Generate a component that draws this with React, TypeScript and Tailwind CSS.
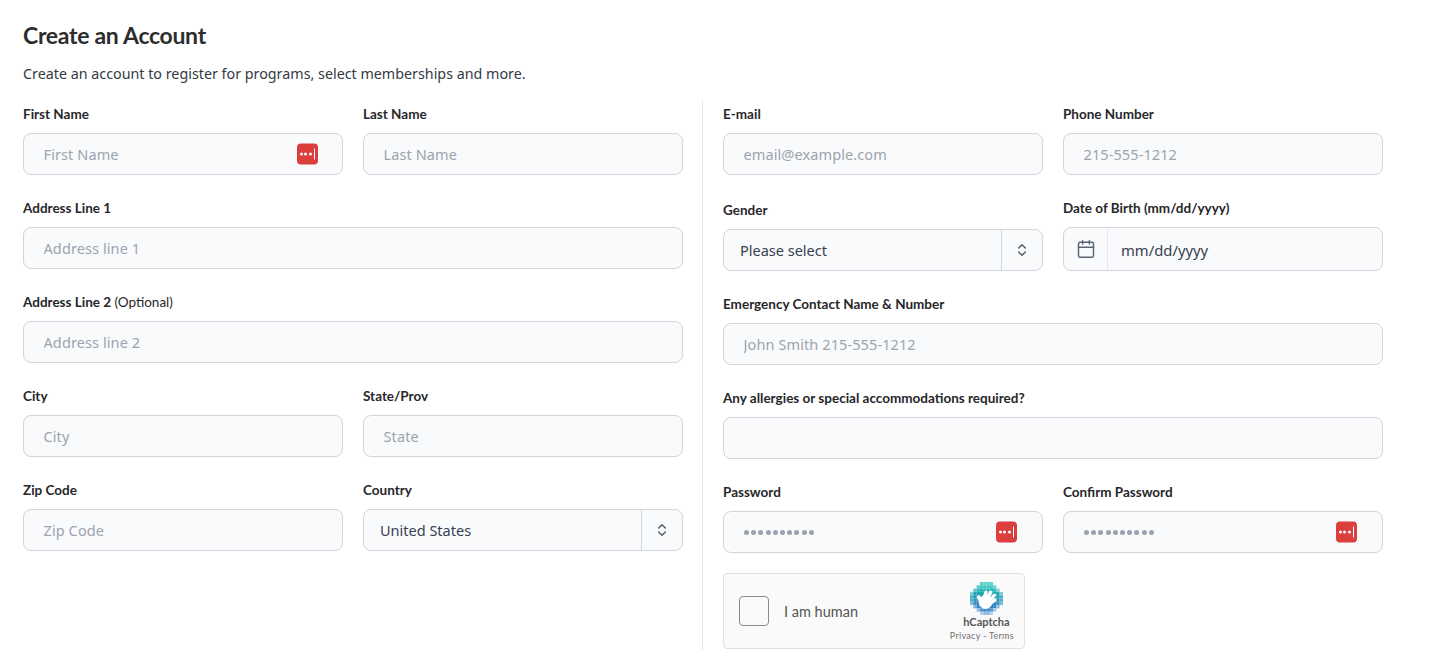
import { Calendar, ChevronsUpDown } from "lucide-react";
import type { ReactNode } from "react";

const inputClass =
  "h-[42px] w-full rounded-lg border border-[#d1d5db] bg-[#f9fafb] pl-[19.5px] pr-5 text-[14.5px] tracking-[0.1px] text-[#374151] outline-none placeholder:text-[#9ca3af]";

function KeyBadge() {
  return (
    <span className="absolute right-[25px] top-1/2 flex h-[21px] w-[21px] -translate-y-1/2 items-center justify-center gap-[1.5px] rounded-[4px] bg-[#dc3d3d]">
      <span className="h-[3px] w-[3px] rounded-full bg-white" />
      <span className="h-[3px] w-[3px] rounded-full bg-white" />
      <span className="h-[3px] w-[3px] rounded-full bg-white" />
      <span className="ml-[1px] h-[11px] w-[1px] bg-white" />
    </span>
  );
}

function Label({ children, className = "" }: { children: ReactNode; className?: string }) {
  return (
    <label className={`mb-[9px] block h-[20px] font-['Lato',sans-serif] text-[13.5px] font-bold leading-[20px] text-[#27272a] ${className}`}>
      {children}
    </label>
  );
}

function Field({
  label,
  placeholder,
  badge,
  span,
  type = "text",
}: {
  label: ReactNode;
  placeholder?: string;
  badge?: boolean;
  span?: boolean;
  type?: string;
}) {
  return (
    <div className={span ? "col-span-2" : ""}>
      <Label>{label}</Label>
      <div className="relative">
        <input className={inputClass} placeholder={placeholder} type={type} />
        {badge ? <KeyBadge /> : null}
      </div>
    </div>
  );
}

function SelectBox({ value, className = "" }: { value: string; className?: string }) {
  return (
    <div className={`flex h-[42px] items-center rounded-lg border border-[#d1d5db] bg-[#f9fafb] text-[14.5px] text-[#374151] ${className}`}>
      <span className="flex-1 pl-4 pt-[2px]">{value}</span>
      <span className="flex h-full w-[41px] items-center justify-center border-l border-[#d1d5db]">
        <ChevronsUpDown className="h-4 w-4 text-[#4b5563]" strokeWidth={2} aria-hidden="true" />
      </span>
    </div>
  );
}

function PasswordField({ label }: { label: string }) {
  return (
    <div>
      <Label>{label}</Label>
      <div className="relative flex h-[42px] items-center rounded-lg border border-[#d1d5db] bg-[#f9fafb] pl-5">
        <span className="flex gap-[2.2px]">
          {Array.from({ length: 10 }).map((_, index) => (
            <span className="h-[5px] w-[5px] rounded-full bg-[#9ca3af]" key={index} />
          ))}
        </span>
        <KeyBadge />
      </div>
    </div>
  );
}

const logoPixels: [number, number, string][] = [
  [3, 0, "#5fd6cb"], [4, 0, "#5fd6cb"], [5, 0, "#5fd6cb"], [6, 0, "#5fd6cb"],
  [2, 1, "#4fcdc6"], [3, 1, "#3fc9c0"], [4, 1, "#3cc8bf"], [5, 1, "#3cc8bf"], [6, 1, "#3fc9c0"], [7, 1, "#70d8d0"],
  [1, 2, "#5cc9c8"], [2, 2, "#2cb9bb"], [3, 2, "#26b4b8"], [4, 2, "#26b4b8"], [5, 2, "#26b4b8"], [6, 2, "#26b4b8"], [7, 2, "#2cb9bb"], [8, 2, "#7ed7d2"],
  [0, 3, "#7ed0d3"], [1, 3, "#21a8b3"], [2, 3, "#1ea4b1"], [3, 3, "#1ea4b1"], [4, 3, "#1ea4b1"], [5, 3, "#1ea4b1"], [6, 3, "#1ea4b1"], [7, 3, "#1ea4b1"], [8, 3, "#21a8b3"], [9, 3, "#7ed0d3"],
  [0, 4, "#49b5c2"], [1, 4, "#1c9aaf"], [2, 4, "#1c9aaf"], [3, 4, "#1c9aaf"], [4, 4, "#1c9aaf"], [5, 4, "#1c9aaf"], [6, 4, "#1c9aaf"], [7, 4, "#1c9aaf"], [8, 4, "#1c9aaf"], [9, 4, "#49b5c2"],
  [0, 5, "#55adc9"], [1, 5, "#2a95bd"], [2, 5, "#2a95bd"], [3, 5, "#2a95bd"], [4, 5, "#2a95bd"], [5, 5, "#2a95bd"], [6, 5, "#2a95bd"], [7, 5, "#2a95bd"], [8, 5, "#2a95bd"], [9, 5, "#55adc9"],
  [0, 6, "#7fbdd8"], [1, 6, "#3a8fc5"], [2, 6, "#2f87c2"], [3, 6, "#2f87c2"], [4, 6, "#2f87c2"], [5, 6, "#2f87c2"], [6, 6, "#2f87c2"], [7, 6, "#2f87c2"], [8, 6, "#3a8fc5"], [9, 6, "#7fbdd8"],
  [1, 7, "#7db4dc"], [2, 7, "#3485c5"], [3, 7, "#2b7ec3"], [4, 7, "#2b7ec3"], [5, 7, "#2b7ec3"], [6, 7, "#2b7ec3"], [7, 7, "#3485c5"], [8, 7, "#8fbfe0"],
  [2, 8, "#8fbde0"], [3, 8, "#4f94cf"], [4, 8, "#3c88ca"], [5, 8, "#3c88ca"], [6, 8, "#4f94cf"], [7, 8, "#a3cae6"],
  [3, 9, "#b5d3ea"], [4, 9, "#8ebce0"], [5, 9, "#8ebce0"], [6, 9, "#b5d3ea"],
];

function HCaptchaLogo() {
  return (
    <svg className="ml-[9px] h-[33px] w-[33px]" viewBox="0 0 32 32" aria-hidden="true">
      {logoPixels.map(([x, y, fill]) => (
        <rect fill={fill} height="3.2" key={`${x}-${y}`} width="3.2" x={x * 3.2} y={y * 3.2} />
      ))}
      <circle cx="15" cy="19.5" fill="#fff" r="6.6" />
      <g stroke="#fff" strokeLinecap="round" strokeWidth="3.4">
        <path d="M8.5 14.5l2.5 6" />
        <path d="M13.5 18l2-8" />
        <path d="M15 19l5-9" />
        <path d="M17 20l6.5-7" />
        <path d="M18 22l6-4.5" />
      </g>
    </svg>
  );
}

function Captcha() {
  return (
    <div className="mt-5 flex h-[76px] w-[302px] items-center rounded border border-[#e0e0e0] bg-[#fafafa] pl-[15px] pr-[10px]">
      <span className="h-[30px] w-[30px] rounded border border-[#8a8a8a] bg-[#fafafa]" />
      <span className="ml-[15px] flex-1 pt-[2px] font-['Lato',sans-serif] text-[14.5px] text-[#555555]">I am human</span>
      <div className="flex flex-col items-center font-['Lato',sans-serif]">
        <HCaptchaLogo />
        <span className="ml-[9px] mt-[1px] text-[11px] font-bold leading-[12px] text-[#555555]">hCaptcha</span>
        <span className="mt-[3px] text-[9px] leading-[10px] tracking-[0.3px] text-[#707070]">Privacy - Terms</span>
      </div>
    </div>
  );
}

export default function App() {
  return (
    <div className="min-h-[666px] bg-white pl-[23px] pt-[18px] font-['Noto_Sans',sans-serif]">
      <h1 className="font-['Lato',sans-serif] text-[23px] font-bold leading-[34px] tracking-[-0.3px] text-[#2d2d2d]">Create an Account</h1>
      <p className="mt-[10px] text-[14.3px] leading-[24px] text-[#333a45]">
        Create an account to register for programs, select memberships and more.
      </p>

      <div className="mt-[14px] flex">
        <div className="grid h-[550px] w-[660px] grid-cols-2 content-start gap-x-5 gap-y-[23px] pt-1">
          <Field label="First Name" placeholder="First Name" badge />
          <Field label="Last Name" placeholder="Last Name" />
          <Field label="Address Line 1" placeholder="Address line 1" span />
          <Field
            label={
              <>
                Address Line 2 <span className="font-normal">(Optional)</span>
              </>
            }
            placeholder="Address line 2"
            span
          />
          <Field label="City" placeholder="City" />
          <Field label="State/Prov" placeholder="State" />
          <Field label="Zip Code" placeholder="Zip Code" />
          <div>
            <Label>Country</Label>
            <SelectBox value="United States" />
          </div>
        </div>

        <div className="ml-[19px] mr-5 w-px bg-[#e5e7eb]" />

        <div className="w-[660px] pt-1">
          <div className="grid grid-cols-2 gap-x-5 gap-y-[23px]">
            <Field label="E-mail" placeholder="email@example.com" />
            <Field label="Phone Number" placeholder="215-555-1212" />
            <div className="pt-[2px]">
              <Label>Gender</Label>
              <SelectBox value="Please select" />
            </div>
            <div>
              <Label>Date of Birth (mm/dd/yyyy)</Label>
              <div className="flex h-[44px] items-center rounded-lg border border-[#d1d5db] bg-[#f9fafb] text-[14.8px] text-[#374151]">
                <span className="flex h-full w-[44px] items-center justify-center border-r border-[#e5e7eb] pl-[1px]">
                  <Calendar className="h-5 w-5 text-[#5b6472]" strokeWidth={1.75} aria-hidden="true" />
                </span>
                <span className="pl-[13px] pt-[2px]">mm/dd/yyyy</span>
              </div>
            </div>
          </div>
          <div className="mt-[23px] grid grid-cols-2 gap-x-5 gap-y-[23px]">
            <Field label="Emergency Contact Name & Number" placeholder="John Smith 215-555-1212" span />
            <Field label="Any allergies or special accommodations required?" span />
            <PasswordField label="Password" />
            <PasswordField label="Confirm Password" />
          </div>
          <Captcha />
        </div>
      </div>
    </div>
  );
}
